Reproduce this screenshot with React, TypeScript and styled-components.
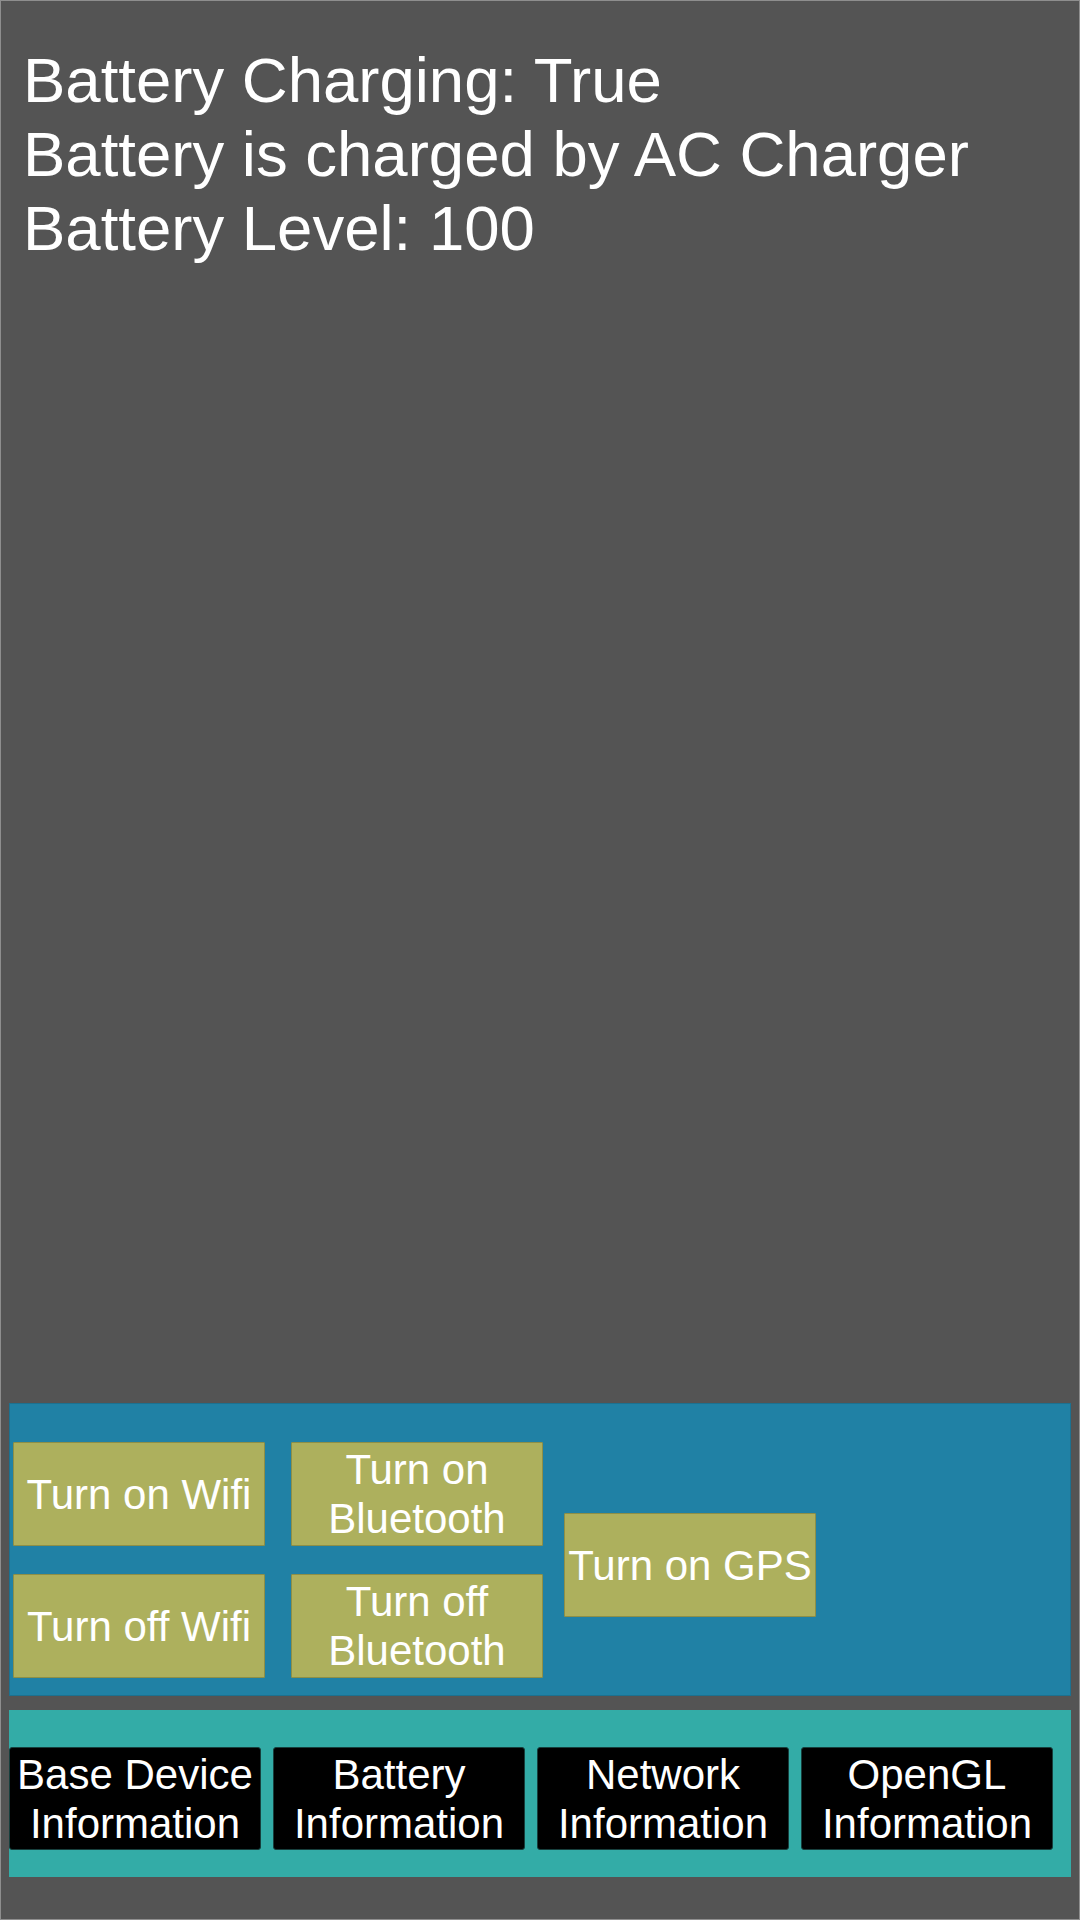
import React from "react";
import styled, { createGlobalStyle } from "styled-components";

const GlobalStyle = createGlobalStyle`
  html, body {
    margin: 0;
    padding: 0;
    background: #545454;
  }
  * { box-sizing: border-box; }
`;

const Screen = styled.div`
  width: 1080px;
  height: 1920px;
  background: #545454;
  border: 1px solid #8e8e8e;
  display: flex;
  flex-direction: column;
  font-family: "Liberation Sans", Arial, sans-serif;
  color: #ffffff;
`;

const InfoBlock = styled.div`
  flex: 1;
  padding: 42px 0 0 22px;
`;

const InfoLine = styled.div`
  font-size: 63.5px;
  line-height: 74px;
  white-space: nowrap;
`;

const ControlPanel = styled.div`
  margin: 0 8px 0 8px;
  height: 293px;
  background: #2081a5;
  border: 1px solid #1c7190;
  display: flex;
  align-items: flex-start;
  padding: 38px 0 0 3px;
`;

const ToggleGrid = styled.div`
  display: grid;
  grid-template-columns: 252px 251px;
  grid-auto-rows: 104px;
  column-gap: 26px;
  row-gap: 28px;
`;

const ToggleButton = styled.button<{ $offset?: number }>`
  width: 252px;
  height: 104px;
  margin-top: ${(p) => p.$offset ?? 0}px;
  margin-left: ${(p) => (p.$offset ? 22 : 0)}px;
  background: #adb05d;
  border: 1px solid #8d8f47;
  border-radius: 1px;
  color: #ffffff;
  font-family: "Liberation Sans", Arial, sans-serif;
  font-size: 42px;
  line-height: 49px;
  padding: 0;
  text-align: center;
  display: flex;
  align-items: center;
  justify-content: center;
`;

const NavPanel = styled.div`
  margin: 14px 8px 42px 8px;
  height: 167px;
  background: #33aca7;
  display: flex;
  align-items: flex-start;
  gap: 12px;
  padding: 37px 0 0 0;
`;

const NavButton = styled.button`
  width: 252px;
  height: 103px;
  background: #000000;
  border: 1px solid #173f3d;
  border-radius: 3px;
  color: #ffffff;
  font-family: "Liberation Sans", Arial, sans-serif;
  font-size: 42px;
  line-height: 49px;
  padding: 0;
  text-align: center;
  display: flex;
  align-items: center;
  justify-content: center;
`;

export default function App() {
  return (
    <>
      <GlobalStyle />
      <Screen>
        <InfoBlock>
          <InfoLine>Battery Charging: True</InfoLine>
          <InfoLine>Battery is charged by AC Charger</InfoLine>
          <InfoLine>Battery Level: 100</InfoLine>
        </InfoBlock>
        <ControlPanel>
          <ToggleGrid>
            <ToggleButton>Turn on Wifi</ToggleButton>
            <ToggleButton>
              Turn on
              <br />
              Bluetooth
            </ToggleButton>
            <ToggleButton>Turn off Wifi</ToggleButton>
            <ToggleButton>
              Turn off
              <br />
              Bluetooth
            </ToggleButton>
          </ToggleGrid>
          <ToggleButton $offset={71}>Turn on GPS</ToggleButton>
        </ControlPanel>
        <NavPanel>
          <NavButton>
            Base Device
            <br />
            Information
          </NavButton>
          <NavButton>
            Battery
            <br />
            Information
          </NavButton>
          <NavButton>
            Network
            <br />
            Information
          </NavButton>
          <NavButton>
            OpenGL
            <br />
            Information
          </NavButton>
        </NavPanel>
      </Screen>
    </>
  );
}
